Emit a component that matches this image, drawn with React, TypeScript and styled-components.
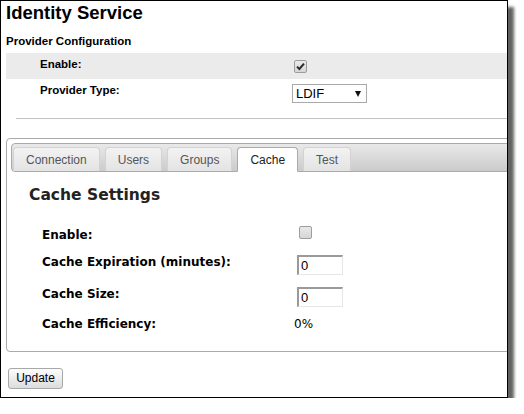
import React from "react";
import styled, { createGlobalStyle } from "styled-components";

const Global = createGlobalStyle`
  html, body { margin: 0; padding: 0; background: #fff; }
  body { font-family: "Liberation Sans", Arial, sans-serif; color: #000; }
  * { box-sizing: border-box; }
`;

const Frame = styled.div`
  width: 508px;
  height: 398px;
  border: 1px solid #000;
  box-shadow: 6px 7px 3px rgba(0, 0, 0, 0.62);
  overflow: hidden;
  background: #fff;
`;

const Page = styled.div`
  width: 580px;
  padding: 1px 0 0 5px;
`;

const Title = styled.h1`
  margin: 0;
  font: bold 18.5px/22px "Liberation Sans", Arial, sans-serif;
  color: #000;
`;

const SectionHeading = styled.h2`
  margin: 10px 0 4px;
  font: bold 11.5px/15px "Liberation Sans", Arial, sans-serif;
  color: #000;
`;

const FormRow = styled.div<{ $shaded?: boolean }>`
  display: grid;
  grid-template-columns: 254px 1fr;
  align-items: start;
  height: 26px;
  padding-left: 34px;
  background: ${(p) => (p.$shaded ? "#ebebeb" : "transparent")};
`;

const FormLabel = styled.div`
  padding-top: 4px;
  font: bold 11.5px/15px "Liberation Sans", Arial, sans-serif;
  color: #000;
`;

const CheckBox = styled.span<{ $top: number; $left: number }>`
  display: inline-flex;
  align-items: center;
  justify-content: center;
  width: 13px;
  height: 13px;
  margin-top: ${(p) => p.$top}px;
  margin-left: ${(p) => p.$left}px;
  border: 1px solid #9d9d9d;
  border-radius: 2px;
  background: linear-gradient(#e9e9e9, #d6d6d6);
  vertical-align: top;
`;

const Select = styled.div`
  display: flex;
  align-items: center;
  justify-content: space-between;
  width: 75px;
  height: 19px;
  margin: 5px 0 0 -2px;
  padding: 0 5px 0 3px;
  border: 1px solid #a9a9a9;
  background: #fff;
  font: 13px/17px "Liberation Sans", Arial, sans-serif;
  color: #000;
`;

const Arrow = styled.span`
  width: 0;
  height: 0;
  border-left: 3px solid transparent;
  border-right: 3px solid transparent;
  border-top: 6px solid #111;
`;

const Rule = styled.div`
  height: 1px;
  margin: 13px 0 0 10px;
  background: #c3c3c3;
`;

const TabsWidget = styled.div`
  margin-top: 19px;
  width: 560px;
  padding: 4px;
  border: 1px solid #aaa;
  border-radius: 4px;
  background: #fff;
`;

const TabBar = styled.div`
  display: flex;
  align-items: flex-start;
  gap: 5px;
  height: 29px;
  padding: 3px 0 0 1px;
  border: 1px solid #aaa;
  border-radius: 4px;
  background: linear-gradient(#e9e9e9, #cbcbcb);
`;

const Tab = styled.div<{ $active?: boolean }>`
  height: ${(p) => (p.$active ? 25 : 24)}px;
  padding: 1px 12px 0;
  border: 1px solid ${(p) => (p.$active ? "#aaa" : "#d3d3d3")};
  border-bottom: ${(p) => (p.$active ? "1px solid #fff" : "none")};
  border-radius: 4px 4px 0 0;
  background: ${(p) =>
    p.$active ? "#fff" : "linear-gradient(#f2f2f2 0%, #ebebeb 50%, #e3e3e3 100%)"};
  font: 12px/22px "Liberation Sans", Arial, sans-serif;
  color: ${(p) => (p.$active ? "#212121" : "#555")};
  white-space: nowrap;
`;

const Panel = styled.div`
  padding: 14px 18px 11px;
`;

const PanelHeading = styled.h3`
  margin: 0 0 15px;
  font: bold 15.5px/19px "DejaVu Sans", Verdana, sans-serif;
  color: #222;
`;

const PanelRow = styled.div<{ $h: number; $top?: number }>`
  display: grid;
  grid-template-columns: 252px 1fr;
  align-items: ${(p) => (p.$top === undefined ? "center" : "start")};
  height: ${(p) => p.$h}px;
  padding-top: ${(p) => p.$top ?? 0}px;
  padding-left: 13px;
`;

const PanelLabel = styled.div`
  font: bold 12px/15px "DejaVu Sans", Verdana, sans-serif;
  color: #000;
`;

const TextInput = styled.div`
  width: 46px;
  height: 20px;
  margin-left: 3px;
  padding-left: 2px;
  border-style: solid;
  border-width: 2px 1px 1px 2px;
  border-color: #9a9a9a #e6e6e6 #e6e6e6 #9a9a9a;
  background: #fff;
  font: 13px/17px "Liberation Sans", Arial, sans-serif;
  color: #000;
`;

const Value = styled.div`
  font: 12px/15px "DejaVu Sans", Verdana, sans-serif;
  color: #000;
`;

const Button = styled.button`
  display: block;
  width: 55px;
  height: 21px;
  margin: 16px 0 0 2px;
  padding: 0;
  border: 1px solid #a8a8a8;
  border-radius: 3px;
  background: linear-gradient(#fdfdfd, #dcdcdc);
  font: 12px/19px "Liberation Sans", Arial, sans-serif;
  color: #000;
`;

const Check = () => (
  <svg width="9" height="9" viewBox="0 0 9 9">
    <path d="M1 4.6 L3.4 7 L8 1.6" fill="none" stroke="#2a2a2a" strokeWidth="2" />
  </svg>
);

const tabs = ["Connection", "Users", "Groups", "Cache", "Test"];

export default function App() {
  return (
    <>
      <Global />
      <Frame>
        <Page>
          <Title>Identity Service</Title>
          <SectionHeading>Provider Configuration</SectionHeading>
          <FormRow $shaded>
            <FormLabel>Enable:</FormLabel>
            <div>
              <CheckBox $top={7} $left={0}>
                <Check />
              </CheckBox>
            </div>
          </FormRow>
          <FormRow>
            <FormLabel>Provider Type:</FormLabel>
            <Select>
              <span>LDIF</span>
              <Arrow />
            </Select>
          </FormRow>
          <Rule />
          <TabsWidget>
            <TabBar>
              {tabs.map((t) => (
                <Tab key={t} $active={t === "Cache"}>
                  {t}
                </Tab>
              ))}
            </TabBar>
            <Panel>
              <PanelHeading>Cache Settings</PanelHeading>
              <PanelRow $h={30}>
                <PanelLabel>Enable:</PanelLabel>
                <div>
                  <CheckBox $top={0} $left={5} />
                </div>
              </PanelRow>
              <PanelRow $h={30} $top={5}>
                <PanelLabel>Cache Expiration (minutes):</PanelLabel>
                <TextInput>0</TextInput>
              </PanelRow>
              <PanelRow $h={32} $top={7}>
                <PanelLabel>Cache Size:</PanelLabel>
                <TextInput>0</TextInput>
              </PanelRow>
              <PanelRow $h={24}>
                <PanelLabel>Cache Efficiency:</PanelLabel>
                <Value>0%</Value>
              </PanelRow>
            </Panel>
          </TabsWidget>
          <Button>Update</Button>
        </Page>
      </Frame>
    </>
  );
}
